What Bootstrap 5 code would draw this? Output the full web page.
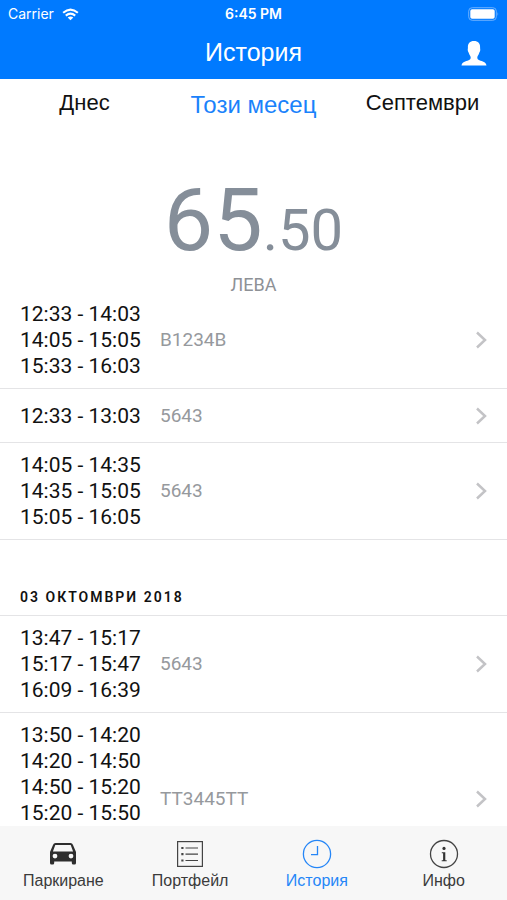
<!DOCTYPE html>
<html lang="bg">
<head>
<meta charset="utf-8">
<meta name="viewport" content="width=device-width, initial-scale=1">
<title>История</title>
<link href="https://cdn.jsdelivr.net/npm/bootstrap@5.3.0/dist/css/bootstrap.min.css" rel="stylesheet">
<style>
body { font-family: Roboto, "Noto Sans", sans-serif; color: #111; }
.app-head { background: #007aff; font-family: Inter, Roboto, sans-serif; }
.status { height: 28px; font-size: 14px; line-height: 28px; padding: 0 8px; }
.status-time { font-weight: 600; }
.title-bar { height: 51px; padding: 0 20px; }
.title-bar h1 { font: 25px/48px "Liberation Sans", Arial, sans-serif; }
.side { flex: 1 1 0; }
.periods { height: 52px; }
.periods button { font: 22px/48px "Liberation Sans", Arial, sans-serif; color: #111; }
.periods button.current { font-size: 24px; line-height: 52px; color: #1a82fb; }
.total { color: #858e99; padding-top: 50px; }
.total-sum { font-size: 58px; line-height: 78px; }
.total-sum .whole { font-size: 88px; }
.total-unit { font-size: 18px; line-height: 14px; color: #8e9196; margin-top: 9px; }
.history { overflow-y: auto; scrollbar-width: none; min-height: 0; }
.history::-webkit-scrollbar { display: none; }
.entry { padding: 9px 20px; border-bottom: 1px solid #e4e4e6; font-size: 21px; line-height: 26px; color: inherit; gap: 20px; min-height: 54px; }
.entry.long { min-height: 173px; }
.times { width: 120px; white-space: nowrap; }
.plate { font-size: 19px; color: #96999d; }
.day { font-size: 14px; line-height: 20px; font-weight: 600; letter-spacing: 2px; padding: 47px 20px 8px; border-bottom: 1px solid #e4e4e6; }
.tabs-bottom { background: #f7f7f7; min-height: 74px; padding-top: 13px; font: 16px/24px "Liberation Sans", Arial, sans-serif; }
.tabs-bottom a { color: #3b3b3b; }
.tabs-bottom a.current { color: #2586f7; }
</style>
<script src="https://cdn.jsdelivr.net/npm/bootstrap@5.3.0/dist/js/bootstrap.bundle.min.js" defer></script>
</head>
<body class="vh-100 d-flex flex-column bg-white">
<svg class="d-none"><symbol id="chevron" viewBox="0 0 12 18"><path d="M2 1.500l8 7.500-8 7.500" fill="none" stroke="#c3c3c6" stroke-width="2.500"/></symbol></svg>

<header class="app-head text-white flex-shrink-0">
  <div class="status d-flex">
    <div class="side d-flex align-items-center gap-2"><span>Carrier</span>
      <svg width="17" height="13" viewBox="0 0 18 13" fill="none" stroke="#fff" stroke-width="2.200" aria-hidden="true"><path d="M1.200 4.700Q9-2.100 16.800 4.700M4 7.700Q9 3.500 14 7.700"/><path d="M6 9.700Q9 7.300 12 9.700L9 12.700z" fill="#fff" stroke="none"/></svg>
    </div>
    <span class="status-time">6:45 PM</span>
    <div class="side d-flex align-items-center justify-content-end">
      <svg width="31" height="14" viewBox="0 0 31 14" aria-hidden="true"><rect x=".7" y=".7" width="27.6" height="12.6" rx="3.5" fill="none" stroke="#6cb1ff"/><rect x="2.3" y="2.3" width="24.4" height="9.4" rx="1.8" fill="#fff"/><path d="M29.5 5q1.5 2 0 4z" fill="#6cb1ff"/></svg>
    </div>
  </div>
  <div class="title-bar d-flex">
    <div class="side"></div>
    <h1 class="m-0">История</h1>
    <div class="side d-flex justify-content-end align-items-center">
      <button class="btn p-0 border-0 d-flex" type="button" aria-label="Профил">
        <svg width="26" height="26" viewBox="0 0 26 26" fill="#fff"><path d="M13 0c4.200 0 6.300 2.500 6.100 6.500-.1 1.200.3 1.500.1 3-.2 1.400-.8 1.700-1.100 2.700-.5 1.700-1.800 2.600-1.800 4.400 0 1.400.7 2.200 2.100 2.700 3.100 1.200 6.500 1.600 7.100 5.200H.5c.6-3.600 4-4 7.100-5.200 1.400-.5 2.100-1.300 2.100-2.700 0-1.800-1.300-2.700-1.800-4.400-.3-1-.9-1.300-1.100-2.700-.2-1.500.2-1.800.1-3C6.700 2.500 8.800 0 13 0z"/></svg>
      </button>
    </div>
  </div>
</header>

<nav class="periods row g-0 flex-shrink-0">
  <button class="btn col-4 p-0 border-0 align-self-start" type="button">Днес</button>
  <button class="btn col-4 p-0 border-0 align-self-start current" type="button" aria-current="true">Този месец</button>
  <button class="btn col-4 p-0 border-0 align-self-start" type="button">Септември</button>
</nav>

<main class="history flex-grow-1">
  <section class="total text-center">
    <div class="total-sum"><span class="whole">65</span>.50</div>
    <div class="total-unit">ЛЕВА</div>
  </section>
  <a href="#" class="entry d-flex align-items-center text-decoration-none">
    <span class="times">12:33 - 14:03<br>14:05 - 15:05<br>15:33 - 16:03</span><span class="plate flex-grow-1">B1234B</span>
    <svg width="12" height="18"><use href="#chevron"/></svg>
  </a>
  <a href="#" class="entry d-flex align-items-center text-decoration-none">
    <span class="times">12:33 - 13:03</span><span class="plate flex-grow-1">5643</span>
    <svg width="12" height="18"><use href="#chevron"/></svg>
  </a>
  <a href="#" class="entry d-flex align-items-center text-decoration-none">
    <span class="times">14:05 - 14:35<br>14:35 - 15:05<br>15:05 - 16:05</span><span class="plate flex-grow-1">5643</span>
    <svg width="12" height="18"><use href="#chevron"/></svg>
  </a>
  <h2 class="day m-0">03 ОКТОМВРИ 2018</h2>
  <a href="#" class="entry d-flex align-items-center text-decoration-none">
    <span class="times">13:47 - 15:17<br>15:17 - 15:47<br>16:09 - 16:39</span><span class="plate flex-grow-1">5643</span>
    <svg width="12" height="18"><use href="#chevron"/></svg>
  </a>
  <a href="#" class="entry long d-flex align-items-center text-decoration-none">
    <span class="times align-self-start">13:50 - 14:20<br>14:20 - 14:50<br>14:50 - 15:20<br>15:20 - 15:50</span><span class="plate flex-grow-1">TT3445TT</span>
    <svg width="12" height="18"><use href="#chevron"/></svg>
  </a>
</main>

<nav class="tabs-bottom row g-0 flex-shrink-0 text-center">
  <a href="#" class="col-3 d-flex flex-column align-items-center text-decoration-none">
    <svg width="30" height="30" viewBox="0 0 30 30" aria-hidden="true"><path fill="#2e2e2e" fill-rule="evenodd" d="M7.5 4h15q1.800 0 2.400 1.700L28 13v11q0 1.500-1.500 1.500h-1.200q-1.500 0-1.500-1.500v-1.500H6.200V24q0 1.500-1.500 1.500H3.500Q2 25.500 2 24V13l3.100-7.300Q5.700 4 7.500 4zM7.300 6L4.900 12.500h20.200L22.700 6zM7 14.700a2.400 2.400 0 1 0 0 4.800 2.400 2.400 0 0 0 0-4.800zm16 0a2.400 2.400 0 1 0 0 4.800 2.400 2.400 0 0 0 0-4.800z"/></svg>
    Паркиране</a>
  <a href="#" class="col-3 d-flex flex-column align-items-center text-decoration-none">
    <svg width="30" height="30" viewBox="0 0 30 30" fill="none" stroke="#444" stroke-width="1.200" aria-hidden="true"><rect x="2.600" y="2.600" width="24.800" height="24.800"/><path d="M10.500 9h12.500M10.500 15.200h12.500M10.500 21.500h12.500"/><path d="M6.300 9h2.200M6.300 15.200h2.200M6.300 21.500h2.200" stroke-width="2.200"/></svg>
    Портфейл</a>
  <a href="#" class="col-3 d-flex flex-column align-items-center text-decoration-none current" aria-current="page">
    <svg width="30" height="30" viewBox="0 0 30 30" fill="none" stroke="#2586f7" stroke-width="1.300" aria-hidden="true"><circle cx="15" cy="15" r="13.600"/><path d="M15.500 7v8.700H9"/></svg>
    История</a>
  <a href="#" class="col-3 d-flex flex-column align-items-center text-decoration-none">
    <svg width="30" height="30" viewBox="0 0 30 30" fill="none" stroke="#444" stroke-width="1.300" aria-hidden="true"><circle cx="15" cy="15" r="13.500"/><circle cx="15" cy="9.400" r="1.600" fill="#333" stroke="none"/><path d="M12.800 13.200h3.500v8h1.400v1h-5v-1h1.400v-7h-1.300z" fill="#333" stroke="none"/></svg>
    Инфо</a>
</nav>
</body>
</html>
